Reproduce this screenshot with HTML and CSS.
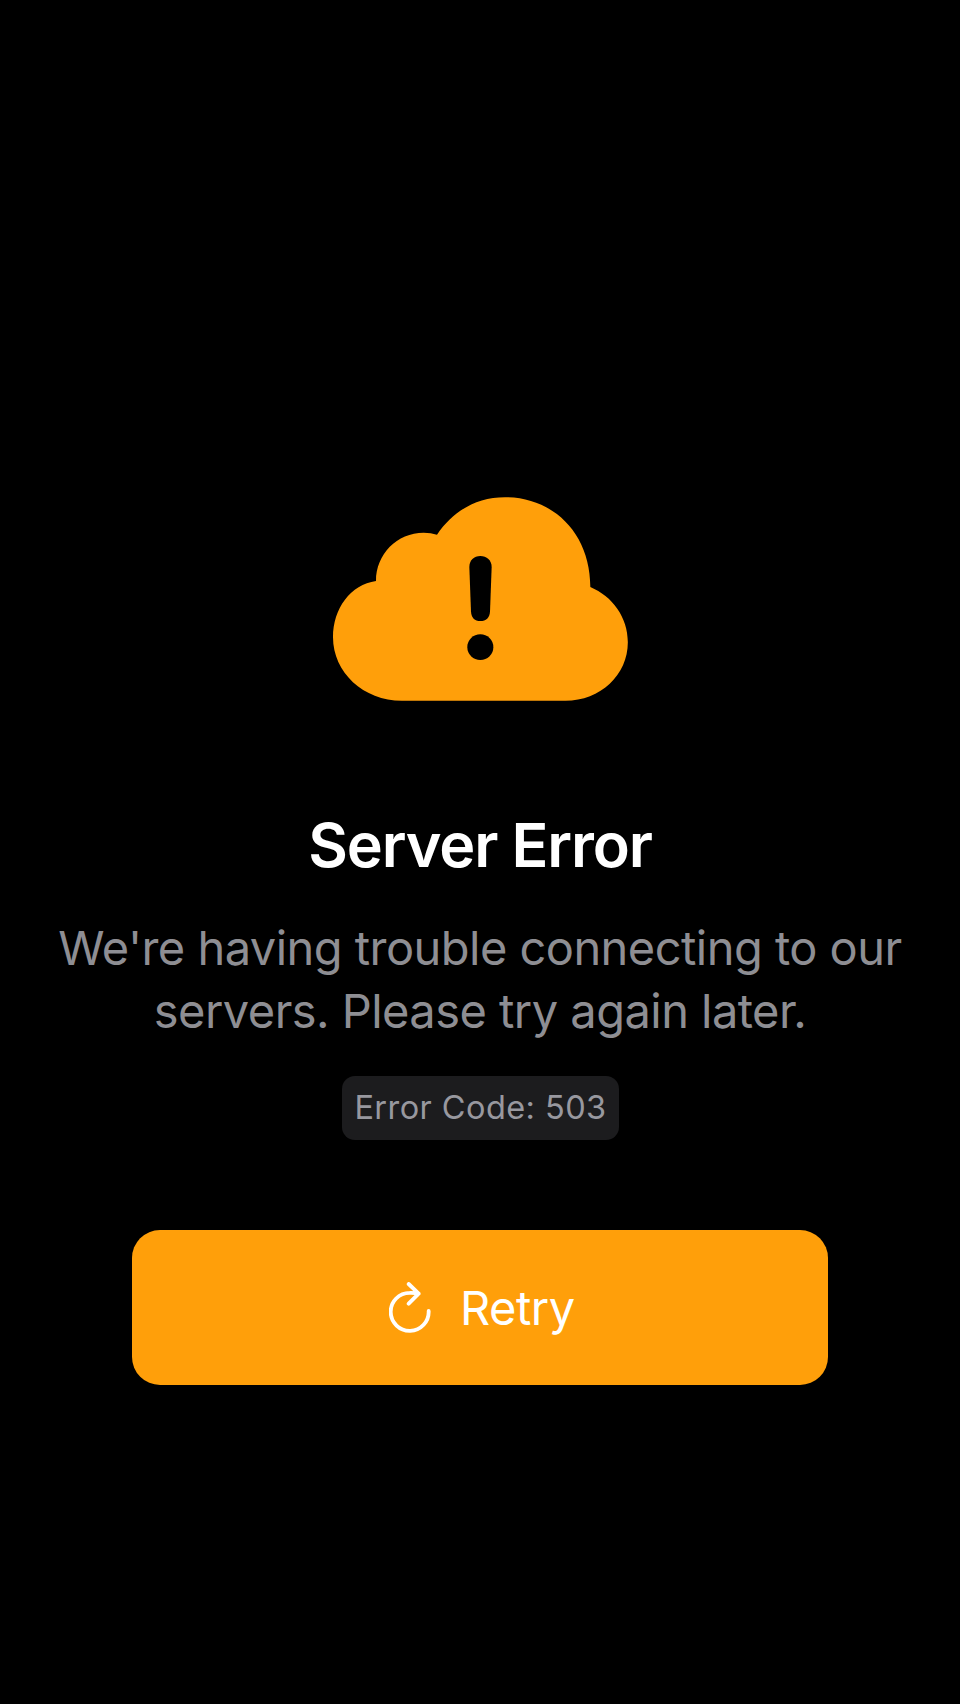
FILE: index.html
```html
<!DOCTYPE html>
<html lang="en">
<head>
<meta charset="utf-8">
<title>Server Error</title>
<link rel="stylesheet" href="styles.css">
</head>
<body>
<main class="error-screen">
  <svg class="cloud" viewBox="39 51 885 612" aria-hidden="true">
    <path fill="#ff9f0a" d="M246 662.500C130 662.500 39 577 39 472C39 385 92 314 168 303C168 223 231 158.500 311 158.500Q333 158.500 351 164C400 92 470 51.500 555 51.500C700 51.500 811 160 811 321C877 349 923.500 411 923.500 487C923.500 585 842 662.500 736 662.500Z"/>
    <path d="M448 261C448 241 462 228 481 228S515 241 515 261L510 395C509 413 498 423 481 423S454 413 453 395Z"/>
    <ellipse cx="481" cy="501.500" rx="39" ry="38.500"/>
  </svg>
  <h1 class="title">Server Error</h1>
  <p class="message">We're having trouble connecting to our<br>servers. Please try again later.</p>
  <div class="code"><span class="code-text">Error Code: 503</span></div>
  <button class="retry" type="button">
    <svg class="retry-icon" viewBox="57 64 126 153" aria-hidden="true">
      <path d="M176 151A57 57 0 1 1 119 96.500Q134 96 146 99M116 70L146 99L116 129"/>
    </svg>
    <span class="retry-label">Retry</span>
  </button>
</main>
</body>
</html>
```
FILE: styles.css
```css
body {
  margin: 0;
  background: #000;
  font-family: Inter, "Liberation Sans", sans-serif;
}

.error-screen {
  box-sizing: border-box;
  height: 1704px;
  padding-top: 497px;
  display: flex;
  flex-direction: column;
  align-items: center;
}

.cloud {
  width: 295px;
  height: 204px;
  margin-left: 1px;
}

.title {
  margin: 107px 0 0;
  font-size: 61px;
  line-height: 74px;
  font-weight: 600;
  letter-spacing: -1.150px;
  color: #fff;
  white-space: nowrap;
}

.message {
  margin: 34px 0 0;
  font-size: 47px;
  line-height: 63px;
  letter-spacing: -0.540px;
  color: #8e8e93;
  text-align: center;
  white-space: nowrap;
}

.code {
  box-sizing: border-box;
  width: 277px;
  height: 64px;
  margin: 34px 0 0 1px;
  border-radius: 13px;
  background: #1c1c1e;
  display: flex;
  align-items: center;
  justify-content: center;
}

.code-text {
  font-size: 32.500px;
  line-height: 40px;
  letter-spacing: 0.430px;
  color: #98989f;
  white-space: nowrap;
}

.retry {
  width: 696px;
  height: 155px;
  margin: 90px 0 0;
  padding: 0 0 0 257px;
  border: 0;
  border-radius: 28px;
  background: #ff9f0a;
  color: #fff;
  font: 400 47px/58px Inter, "Liberation Sans", sans-serif;
  display: flex;
  align-items: center;
  gap: 29px;
}

.retry-icon {
  width: 42px;
  height: 51px;
  margin-top: -1px;
  fill: none;
  stroke: #fff;
  stroke-width: 11.500;
  stroke-linecap: round;
  stroke-linejoin: round;
}

.retry-label {
  letter-spacing: -0.500px;
}
```
